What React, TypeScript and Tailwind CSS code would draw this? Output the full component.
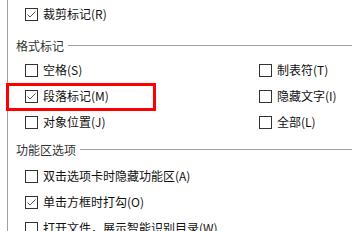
const Check = ({ checked }: { checked?: boolean }) => (
  <span className="w-[13px] h-[13px] border border-[#333333] bg-white flex items-center justify-center shrink-0">
    {checked && (
      <svg width="11" height="11" viewBox="0 0 11 11">
        <polyline points="1.5,5.5 4,8 9.5,2.5" fill="none" stroke="#555555" strokeWidth="1" />
      </svg>
    )}
  </span>
);

const Item = ({ label, checked }: { label: string; checked?: boolean }) => (
  <div className="flex items-center gap-[5px] h-[26px] whitespace-nowrap">
    <Check checked={checked} />
    <span>{label}</span>
  </div>
);

const Header = ({ label }: { label: string }) => (
  <div className="flex items-center h-[16px] pl-[8px] text-[#333333]">
    <span className="whitespace-nowrap">{label}</span>
    <span className="flex-1 h-px bg-[#a0a0a0] ml-[4px] -translate-y-[1px]" />
  </div>
);

export default function App() {
  return (
    <div
      className="relative w-[352px] h-[231px] overflow-hidden bg-white text-[12px] text-[#111111]"
      style={{ fontFamily: '"Noto Sans CJK SC", "Microsoft YaHei", sans-serif' }}
    >
      <div className="ml-[7px] h-full border-l border-[#a0a0a0] pt-[1px]">
        <div className="pl-[17px]">
          <Item label="裁剪标记(R)" checked />
        </div>
        <div className="mt-[11px]">
          <Header label="格式标记" />
        </div>
        <div className="pl-[17px] mt-[3px] grid grid-cols-[234px_1fr]">
          <Item label="空格(S)" />
          <Item label="制表符(T)" />
          <Item label="段落标记(M)" checked />
          <Item label="隐藏文字(I)" />
          <Item label="对象位置(J)" />
          <Item label="全部(L)" />
        </div>
        <div className="mt-[7px]">
          <Header label="功能区选项" />
        </div>
        <div className="pl-[17px] mt-[5px]">
          <Item label="双击选项卡时隐藏功能区(A)" />
          <Item label="单击方框时打勾(O)" checked />
          <Item label="打开文件，展示智能识别目录(W)" />
        </div>
      </div>
      <div className="absolute left-[6px] top-[83px] w-[150px] h-[28px] border-[3px] border-[#ff0000]" />
    </div>
  );
}
